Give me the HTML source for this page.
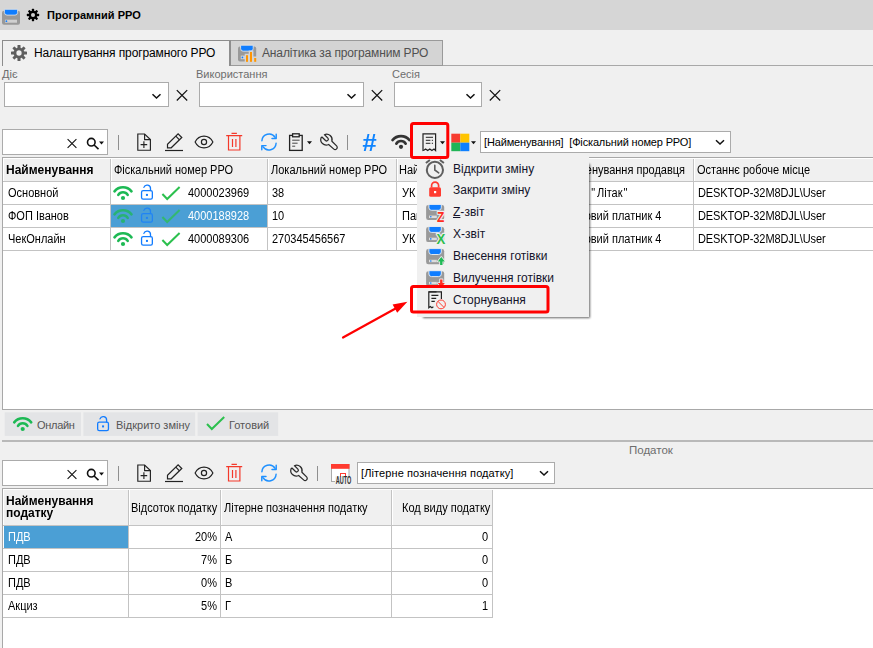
<!DOCTYPE html>
<html lang="uk"><head><meta charset="utf-8"><title>Програмний РРО</title>
<style>
*{box-sizing:border-box;margin:0;padding:0}
html,body{width:873px;height:648px;overflow:hidden;background:#f0f0f0}
body{position:relative;font-family:"Liberation Sans",sans-serif;font-size:11px;color:#000}
.a{position:absolute}
.t{position:absolute;white-space:nowrap;line-height:14px}
#title{left:0;top:0;width:873px;height:30px;background:#d6d6d6}
.tab1{left:2px;top:40px;width:228px;height:26px;border:1px solid #8c8c8c;border-bottom:none;background:#f0f0f0}
.tab2{left:230px;top:40px;width:213px;height:26px;border:1px solid #9a9a9a;border-left:none;background:#d4d4d4}
.tabline{left:229px;top:65px;width:644px;height:1px;background:#a8a8a8}
.lbl{color:#6d6d6d;font-size:11px}
.cb{background:#fff;border:1px solid #ababab}
.grid{background:#fff;border:1px solid #a8a8a8}
.hd{background:#f0f0f0}
.vl{background:#c3c3c3;width:1px}
.hl{background:#c3c3c3;height:1px}
.sel{background:#4b9fd5}
.leg{background:#e3e3e3;height:24px;top:412px}
.legt{color:#555;top:418px}
.mi{font-size:12px;color:#14142b;left:453px;letter-spacing:0.02px}
.sep{width:1px;height:15px;background:#8f8f8f}
svg{position:absolute;overflow:visible}
.hb{font-weight:bold;font-size:12.5px;transform:scaleX(.96);transform-origin:0 50%}
.g{font-size:12.5px;transform:scaleX(.88);transform-origin:0 50%}
.gr{transform-origin:100% 50%}
</style></head><body>
<div id="title" class="a" style="left:0px;top:0px;width:873px;height:30px;"></div>
<div class="t " style="left:47px;top:8px;font-weight:bold;font-size:11px;letter-spacing:0.05px">Програмний РРО</div>
<div class="a tabline" style="left:229px;top:65px;width:644px;height:1px;"></div>
<div class="a tab1"></div><div class="a tab2"></div>
<div class="a " style="left:229px;top:40px;width:2px;height:26px;background:#8e8e8e"></div>
<div class="t " style="left:34px;top:46px;font-size:12px;letter-spacing:-0.12px">Налаштування програмного РРО</div>
<div class="t " style="left:262px;top:46px;font-size:12px;color:#505050;letter-spacing:-0.14px">Аналітика за програмним РРО</div>
<div class="t lbl" style="left:2px;top:67px;">Діє</div>
<div class="t lbl" style="left:196px;top:67px;">Використання</div>
<div class="t lbl" style="left:392px;top:67px;">Сесія</div>
<div class="a cb" style="left:4px;top:82px;width:165px;height:25px;"></div>
<div class="a cb" style="left:199px;top:82px;width:165px;height:25px;"></div>
<div class="a cb" style="left:394px;top:82px;width:88px;height:25px;"></div>
<div class="a cb" style="left:2px;top:129px;width:106px;height:26px;"></div>
<div class="a sep" style="left:118px;top:135px;width:1px;height:15px;"></div>
<div class="a sep" style="left:347px;top:135px;width:1px;height:15px;"></div>
<div class="a cb" style="left:480px;top:131px;width:251px;height:22px;"></div>
<div class="t " style="left:484px;top:135px;letter-spacing:-0.15px">[Найменування]&nbsp; [Фіскальний номер РРО]</div>
<div class="t " style="left:362.3px;top:129.6px;font-weight:bold;font-style:italic;font-size:23px;line-height:26px;color:#0f84ff;transform:scaleX(1.12);transform-origin:0 50%">#</div>
<div class="a grid" style="left:2px;top:157px;width:875px;height:253px;"></div>
<div class="a hd" style="left:3px;top:158px;width:870px;height:23px;"></div>
<div class="a hl" style="left:3px;top:181px;width:870px;height:1px;"></div>
<div class="a hl" style="left:3px;top:204px;width:870px;height:1px;"></div>
<div class="a hl" style="left:3px;top:227px;width:870px;height:1px;"></div>
<div class="a hl" style="left:3px;top:250px;width:870px;height:1px;"></div>
<div class="a vl" style="left:110px;top:158px;width:1px;height:93px;"></div>
<div class="a " style="left:111px;top:158px;width:1px;height:23px;background:#fff"></div>
<div class="a vl" style="left:267px;top:158px;width:1px;height:93px;"></div>
<div class="a " style="left:268px;top:158px;width:1px;height:23px;background:#fff"></div>
<div class="a vl" style="left:396px;top:158px;width:1px;height:93px;"></div>
<div class="a " style="left:397px;top:158px;width:1px;height:23px;background:#fff"></div>
<div class="a vl" style="left:693px;top:158px;width:1px;height:93px;"></div>
<div class="a " style="left:694px;top:158px;width:1px;height:23px;background:#fff"></div>
<div class="a " style="left:3px;top:158px;width:870px;height:1px;background:#fff"></div>
<div class="a " style="left:3px;top:158px;width:1px;height:23px;background:#fff"></div>
<div class="a sel" style="left:111px;top:205px;width:156px;height:22px;"></div>
<div class="t hb" style="left:6px;top:162.5px;">Найменування</div>
<div class="t g " style="left:114px;top:162.5px;">Фіскальний номер РРО</div>
<div class="t g " style="left:271px;top:162.5px;">Локальний номер РРО</div>
<div class="t g " style="left:399.3px;top:162.5px;">Най</div>
<div class="t g " style="left:697px;top:162.5px;">Останнє робоче місце</div>
<div class="t g " style="left:558px;top:162.5px;">Найменування продавця</div>
<div class="t g " style="left:8px;top:186px;">Основной</div>
<div class="t g " style="left:188px;top:186px;">4000023969</div>
<div class="t g " style="left:272px;top:186px;">38</div>
<div class="t g " style="left:402px;top:186px;">УК</div>
<div class="t g " style="left:698px;top:186px;letter-spacing:-0.1px">DESKTOP-32M8DJL\User</div>
<div class="t g " style="left:8px;top:209px;">ФОП Іванов</div>
<div class="t g " style="left:188px;top:209px;color:#fff">4000188928</div>
<div class="t g " style="left:272px;top:209px;">10</div>
<div class="t g " style="left:402px;top:209px;">Пай</div>
<div class="t g " style="left:698px;top:209px;letter-spacing:-0.1px">DESKTOP-32M8DJL\User</div>
<div class="t g " style="left:8px;top:232px;">ЧекОнлайн</div>
<div class="t g " style="left:188px;top:232px;">4000089306</div>
<div class="t g " style="left:272px;top:232px;">270345456567</div>
<div class="t g " style="left:402px;top:232px;">УК</div>
<div class="t g " style="left:698px;top:232px;letter-spacing:-0.1px">DESKTOP-32M8DJL\User</div>
<div class="t g " style="left:566.3px;top:186px;">ТОВ <span style="letter-spacing:2.2px">"</span>Літак<span style="letter-spacing:2.2px;margin-left:1px">"</span></div>
<div class="t g " style="left:562px;top:209px;">Тестовий платник 4</div>
<div class="t g " style="left:562px;top:232px;">Тестовий платник 4</div>
<svg style="left:0;top:0" width="300" height="648"><g fill="#e3e4e6"><rect x="4.7" y="412.3" width="76.3" height="23.6"/><rect x="83.4" y="412.3" width="111.8" height="23.6"/><rect x="197.6" y="412.3" width="80.6" height="23.6"/></g></svg>
<div class="t legt" style="left:37px;top:418px;letter-spacing:-0.3px">Онлайн</div>
<div class="t legt" style="left:116px;top:418px;">Відкрито зміну</div>
<div class="t legt" style="left:229px;top:418px;">Готовий</div>
<div class="a " style="left:2px;top:440px;width:871px;height:2px;background:#b9b9b9"></div>
<div class="t lbl" style="left:629px;top:443px;font-size:11.5px">Податок</div>
<div class="a cb" style="left:2px;top:460px;width:106px;height:26px;"></div>
<div class="a sep" style="left:118px;top:466px;width:1px;height:15px;"></div>
<div class="a sep" style="left:317px;top:466px;width:1px;height:15px;"></div>
<div class="a cb" style="left:357px;top:462px;width:198px;height:22px;"></div>
<div class="t " style="left:361px;top:466px;letter-spacing:0.1px">[Літерне позначення податку]</div>
<div class="a grid" style="left:2px;top:488px;width:875px;height:170px;"></div>
<div class="a hd" style="left:3px;top:489px;width:490px;height:36px;"></div>
<div class="a hl" style="left:3px;top:525px;width:490px;height:1px;"></div>
<div class="a hl" style="left:3px;top:548px;width:490px;height:1px;"></div>
<div class="a hl" style="left:3px;top:571px;width:490px;height:1px;"></div>
<div class="a hl" style="left:3px;top:594px;width:490px;height:1px;"></div>
<div class="a hl" style="left:3px;top:617px;width:490px;height:1px;"></div>
<div class="a vl" style="left:128px;top:489px;width:1px;height:129px;"></div>
<div class="a vl" style="left:220px;top:489px;width:1px;height:129px;"></div>
<div class="a vl" style="left:391px;top:489px;width:1px;height:129px;"></div>
<div class="a vl" style="left:492px;top:489px;width:1px;height:129px;"></div>
<div class="a " style="left:129px;top:489px;width:1px;height:36px;background:#fff"></div>
<div class="a " style="left:221px;top:489px;width:1px;height:36px;background:#fff"></div>
<div class="a " style="left:392px;top:489px;width:1px;height:36px;background:#fff"></div>
<div class="a " style="left:3px;top:489px;width:490px;height:1px;background:#fff"></div>
<div class="a " style="left:3px;top:489px;width:1px;height:36px;background:#fff"></div>
<div class="a sel" style="left:4px;top:526px;width:124px;height:22px;"></div>
<div class="t hb" style="left:6.3px;top:494.6px;line-height:12.1px">Найменування<br>податку</div>
<div class="t g " style="left:131px;top:501px;">Відсоток податку</div>
<div class="t g " style="left:224px;top:501px;">Літерне позначення податку</div>
<div class="t g " style="left:402px;top:501px;">Код виду податку</div>
<div class="t g " style="left:8px;top:530px;color:#fff">ПДВ</div>
<div class="t g gr" style="left:129px;width:88px;text-align:right;top:530px">20%</div>
<div class="t g " style="left:225px;top:530px;">А</div>
<div class="t g gr" style="left:392px;width:96px;text-align:right;top:530px">0</div>
<div class="t g " style="left:8px;top:553px;">ПДВ</div>
<div class="t g gr" style="left:129px;width:88px;text-align:right;top:553px">7%</div>
<div class="t g " style="left:225px;top:553px;">Б</div>
<div class="t g gr" style="left:392px;width:96px;text-align:right;top:553px">0</div>
<div class="t g " style="left:8px;top:576px;">ПДВ</div>
<div class="t g gr" style="left:129px;width:88px;text-align:right;top:576px">0%</div>
<div class="t g " style="left:225px;top:576px;">В</div>
<div class="t g gr" style="left:392px;width:96px;text-align:right;top:576px">0</div>
<div class="t g " style="left:8px;top:599px;">Акциз</div>
<div class="t g gr" style="left:129px;width:88px;text-align:right;top:599px">5%</div>
<div class="t g " style="left:225px;top:599px;">Г</div>
<div class="t g gr" style="left:392px;width:96px;text-align:right;top:599px">1</div>
<svg style="left:0;top:0" width="873" height="648" viewBox="0 0 873 648"><rect x="2" y="10.7" width="18" height="14" rx="2" fill="#999"/><path d="M4.4 9.299999999999999h13.2v3.2a2.6 2.6 0 0 1 -2.6 2.6h-8a2.6 2.6 0 0 1 -2.6 -2.6z" fill="#0f7dff" stroke="#e8e8e8" stroke-width="0.8"/><rect x="5" y="19.7" width="12" height="3" fill="#d0d0d0"/><circle cx="6.4" cy="21.2" r="0.9" fill="#0f7dff"/><g transform="translate(33 15)" fill="#000"><rect x="-1.18" y="-6.20" width="2.36" height="3.10" rx="0.6" transform="rotate(0)"/><rect x="-1.18" y="-6.20" width="2.36" height="3.10" rx="0.6" transform="rotate(45)"/><rect x="-1.18" y="-6.20" width="2.36" height="3.10" rx="0.6" transform="rotate(90)"/><rect x="-1.18" y="-6.20" width="2.36" height="3.10" rx="0.6" transform="rotate(135)"/><rect x="-1.18" y="-6.20" width="2.36" height="3.10" rx="0.6" transform="rotate(180)"/><rect x="-1.18" y="-6.20" width="2.36" height="3.10" rx="0.6" transform="rotate(225)"/><rect x="-1.18" y="-6.20" width="2.36" height="3.10" rx="0.6" transform="rotate(270)"/><rect x="-1.18" y="-6.20" width="2.36" height="3.10" rx="0.6" transform="rotate(315)"/><circle r="4.22"/><circle r="2.05" fill="#cfcfcf"/></g><g transform="translate(19 53)" fill="#5f5f5f"><rect x="-1.52" y="-8.00" width="3.04" height="4.00" rx="0.6" transform="rotate(0)"/><rect x="-1.52" y="-8.00" width="3.04" height="4.00" rx="0.6" transform="rotate(45)"/><rect x="-1.52" y="-8.00" width="3.04" height="4.00" rx="0.6" transform="rotate(90)"/><rect x="-1.52" y="-8.00" width="3.04" height="4.00" rx="0.6" transform="rotate(135)"/><rect x="-1.52" y="-8.00" width="3.04" height="4.00" rx="0.6" transform="rotate(180)"/><rect x="-1.52" y="-8.00" width="3.04" height="4.00" rx="0.6" transform="rotate(225)"/><rect x="-1.52" y="-8.00" width="3.04" height="4.00" rx="0.6" transform="rotate(270)"/><rect x="-1.52" y="-8.00" width="3.04" height="4.00" rx="0.6" transform="rotate(315)"/><circle r="5.44"/><circle r="2.64" fill="#f0f0f0"/></g><rect x="238" y="46.4" width="18.2" height="15" rx="2" fill="#999"/><path d="M240.6 45.2h12.6v3.4a2.6 2.6 0 0 1 -2.6 2.6h-7.4a2.6 2.6 0 0 1 -2.6 -2.6z" fill="#0f7dff" stroke="#e4e4e4" stroke-width="0.9"/><rect x="240.8" y="55.6" width="5" height="3.6" fill="#d4d4d4"/><circle cx="242.4" cy="57.4" r="0.85" fill="#0f7dff"/><path d="M244.7 62.5V53.7H248.7V50.6H253.4V56.6H257V62.5Z" fill="#d4d4d4"/><rect x="246" y="55.2" width="2" height="6.6" fill="#ff9500"/><rect x="250" y="52" width="2" height="9.8" fill="#ff9500"/><rect x="254.2" y="58" width="2" height="3.8" fill="#ff9500"/><path d="M152.5 94.2L156.5 98L160.5 94.2" fill="none" stroke="#111" stroke-width="1.5"/><path d="M347.5 94.2L351.5 98L355.5 94.2" fill="none" stroke="#111" stroke-width="1.5"/><path d="M466.5 94.2L470.5 98L474.5 94.2" fill="none" stroke="#111" stroke-width="1.5"/><path d="M176.8 90.1L187.2 100.5M187.2 90.1L176.8 100.5" fill="none" stroke="#111" stroke-width="1.25"/><path d="M371.8 90.1L382.2 100.5M382.2 90.1L371.8 100.5" fill="none" stroke="#111" stroke-width="1.25"/><path d="M489.8 90.1L500.2 100.5M500.2 90.1L489.8 100.5" fill="none" stroke="#111" stroke-width="1.25"/><path d="M67.6 139.1L76.4 147.9M76.4 139.1L67.6 147.9" fill="none" stroke="#111" stroke-width="1.1"/><g fill="none" stroke="#111" stroke-width="1.6"><circle cx="91.3" cy="142.2" r="3.8"/><path d="M94.1 145.0l4.4 4.2"/></g><path d="M99 141.4h5l-2.5 3z" fill="#111"/><g fill="none" stroke="#222" stroke-width="1.15"><path d="M137.79999999999998 134.0h6.8l5.8 5.6v10.6h-12.6z"/><path d="M144.6 134.0v5.6h5.8"/><path d="M143.89999999999998 141.3v6.6M140.6 144.6h6.6"/></g><g fill="none" stroke="#222" stroke-width="1.2"><path d="M165 150.5h18"/><path d="M167.5 147.79999999999998v-3.6l10.6 -10.4l3.7 3.7l-10.6 10.3z"/><path d="M175.8 136.1l3.7 3.7"/></g><g fill="none" stroke="#222" stroke-width="1.2" stroke-linejoin="round"><path d="M195.1 142C199 134.2 209 134.2 212.9 142C209 149.8 199 149.8 195.1 142z"/><circle cx="204" cy="142" r="2.6"/></g><g fill="none" stroke="#f4392b" stroke-width="1.2"><path d="M226.2 135.6h16M231.5 133.4h5.4"/><path d="M228.5 135.6v14.4h11.4v-14.4"/><path d="M232.5 139v8M235.89999999999998 139v8"/></g><g fill="none" stroke="#1e90ff" stroke-width="1.45" stroke-linecap="round" stroke-linejoin="round"><path d="M261.9 140.8a7.2 7.2 0 0 1 13.2 -3.5"/><path d="M276.2 134.2v4.2h-4.2"/><path d="M276.1 143.2a7.2 7.2 0 0 1 -13.2 3.5"/><path d="M261.8 149.8v-4.2h4.2"/></g><path d="M67.6 470.1L76.4 478.9M76.4 470.1L67.6 478.9" fill="none" stroke="#111" stroke-width="1.1"/><g fill="none" stroke="#111" stroke-width="1.6"><circle cx="91.3" cy="473.2" r="3.8"/><path d="M94.1 476.0l4.4 4.2"/></g><path d="M99 472.4h5l-2.5 3z" fill="#111"/><g fill="none" stroke="#222" stroke-width="1.15"><path d="M137.79999999999998 465.0h6.8l5.8 5.6v10.6h-12.6z"/><path d="M144.6 465.0v5.6h5.8"/><path d="M143.89999999999998 472.29999999999995v6.6M140.6 475.59999999999997h6.6"/></g><g fill="none" stroke="#222" stroke-width="1.2"><path d="M165 481.5h18"/><path d="M167.5 478.8v-3.6l10.6 -10.4l3.7 3.7l-10.6 10.3z"/><path d="M175.8 467.09999999999997l3.7 3.7"/></g><g fill="none" stroke="#222" stroke-width="1.2" stroke-linejoin="round"><path d="M195.1 473C199 465.2 209 465.2 212.9 473C209 480.8 199 480.8 195.1 473z"/><circle cx="204" cy="473" r="2.6"/></g><g fill="none" stroke="#f4392b" stroke-width="1.2"><path d="M226.2 466.6h16M231.5 464.4h5.4"/><path d="M228.5 466.6v14.4h11.4v-14.4"/><path d="M232.5 470v8M235.89999999999998 470v8"/></g><g fill="none" stroke="#1e90ff" stroke-width="1.45" stroke-linecap="round" stroke-linejoin="round"><path d="M261.9 471.8a7.2 7.2 0 0 1 13.2 -3.5"/><path d="M276.2 465.2v4.2h-4.2"/><path d="M276.1 474.2a7.2 7.2 0 0 1 -13.2 3.5"/><path d="M261.8 480.8v-4.2h4.2"/></g><g fill="none" stroke="#222" stroke-width="1.3"><rect x="289.6" y="135.4" width="12.6" height="15" /><rect x="292.6" y="133.8" width="6.6" height="3" fill="#f0f0f0"/><path stroke-width="1" stroke="#444" d="M292.2 140.20000000000002h7.4M292.2 143.20000000000002h5.4M292.2 146.20000000000002h3"/></g><path d="M307 141.3h5l-2.5 3z" fill="#111"/><path transform="translate(320 133)" fill="none" stroke="#2b2b2b" stroke-width="1.25" stroke-linejoin="round" d="M4.4 1.7A5.5 5.5 0 0 1 11.9 8.2L16.6 12.9A2.1 2.1 0 0 1 13.6 15.9L8.6 11.5A5.5 5.5 0 0 1 1.2 4.4L2.2 4.2L5.5 7.5A1.7 1.7 0 0 0 7.9 5.1L4.6 1.8Z"/><path transform="translate(290 464)" fill="none" stroke="#2b2b2b" stroke-width="1.25" stroke-linejoin="round" d="M4.4 1.7A5.5 5.5 0 0 1 11.9 8.2L16.6 12.9A2.1 2.1 0 0 1 13.6 15.9L8.6 11.5A5.5 5.5 0 0 1 1.2 4.4L2.2 4.2L5.5 7.5A1.7 1.7 0 0 0 7.9 5.1L4.6 1.8Z"/><g opacity="1" fill="none" stroke="#333" stroke-width="2.6" stroke-linecap="round"><circle cx="401" cy="146.8" r="2.1" fill="#333" stroke="none"/><path d="M396.3 143.70000000000002a5.5 5.5 0 0 1 9.4 0"/><path d="M392.5 140.10000000000002a11 11 0 0 1 17 0"/></g><g fill="none" stroke="#222" stroke-width="1.2"><path d="M423.0 150.5v-16.6h12.6v16.6l-1.6 -1.5l-2.1 1.5l-2.1 -1.5l-2.1 1.5l-2.1 -1.5l-1.3 1z"/><path stroke-width="1" d="M425.79999999999995 137.3h7.2M425.79999999999995 140.3h4.6M431.79999999999995 140.3h1.2M425.79999999999995 143.3h4.6M431.79999999999995 143.3h1.2"/></g><path d="M440 141.3h5l-2.5 3z" fill="#111"/><rect x="451.3" y="133.7" width="9" height="9" fill="#f73c30"/><rect x="460.3" y="133.7" width="9" height="9" fill="#ffc400"/><rect x="451.3" y="142.7" width="9" height="8.5" fill="#20b457"/><rect x="460.3" y="142.7" width="9" height="8.5" fill="#0f80ff"/><path d="M471 141.3h5l-2.5 3z" fill="#111"/><path d="M716 140.2L720 144L724 140.2" fill="none" stroke="#111" stroke-width="1.5"/><path d="M540 471.2L544 475L548 471.2" fill="none" stroke="#111" stroke-width="1.5"/><rect x="331.5" y="464.5" width="17.5" height="17" fill="#fff" stroke="#aaa" stroke-width="1"/><rect x="331" y="464" width="18.5" height="4.8" fill="#ff3b30"/><rect x="340.5" y="473.5" width="5" height="4" fill="none" stroke="#ff3b30"/><rect x="335" y="476.5" width="17" height="8" fill="#f0f0f0"/><text transform="translate(335.8 484.3) scale(0.54 1)" font-family="Liberation Sans, sans-serif" font-weight="bold" font-size="10.2" fill="#2e2e2e">AUTO</text><g opacity="1" fill="none" stroke="#1db954" stroke-width="2.6" stroke-linecap="round"><circle cx="123" cy="198" r="2.1" fill="#1db954" stroke="none"/><path d="M118.3 194.9a5.5 5.5 0 0 1 9.4 0"/><path d="M114.5 191.3a11 11 0 0 1 17 0"/></g><g opacity="1" fill="none" stroke="#127cff" stroke-width="1.3" stroke-linecap="round"><rect x="141.55" y="190.55" width="10.8" height="8.6" rx="1.6"/><path d="M150.5 190.55v-1.75a3.4 3.4 0 0 0 -6.6 -1.4"/><rect x="145.95000000000002" y="193.9" width="2" height="2" fill="#127cff" stroke="none"/></g><path opacity="1" d="M162.4 194l4.8 5l12.4 -12" fill="none" stroke="#2cc04e" stroke-width="2"/><g opacity="0.75" fill="none" stroke="#1db954" stroke-width="2.6" stroke-linecap="round"><circle cx="123" cy="221" r="2.1" fill="#1db954" stroke="none"/><path d="M118.3 217.9a5.5 5.5 0 0 1 9.4 0"/><path d="M114.5 214.3a11 11 0 0 1 17 0"/></g><g opacity="0.75" fill="none" stroke="#127cff" stroke-width="1.3" stroke-linecap="round"><rect x="141.55" y="213.55" width="10.8" height="8.6" rx="1.6"/><path d="M150.5 213.55v-1.75a3.4 3.4 0 0 0 -6.6 -1.4"/><rect x="145.95000000000002" y="216.9" width="2" height="2" fill="#127cff" stroke="none"/></g><path opacity="0.75" d="M162.4 217l4.8 5l12.4 -12" fill="none" stroke="#2cc04e" stroke-width="2"/><g opacity="1" fill="none" stroke="#1db954" stroke-width="2.6" stroke-linecap="round"><circle cx="123" cy="244" r="2.1" fill="#1db954" stroke="none"/><path d="M118.3 240.9a5.5 5.5 0 0 1 9.4 0"/><path d="M114.5 237.3a11 11 0 0 1 17 0"/></g><g opacity="1" fill="none" stroke="#127cff" stroke-width="1.3" stroke-linecap="round"><rect x="141.55" y="236.55" width="10.8" height="8.6" rx="1.6"/><path d="M150.5 236.55v-1.75a3.4 3.4 0 0 0 -6.6 -1.4"/><rect x="145.95000000000002" y="239.9" width="2" height="2" fill="#127cff" stroke="none"/></g><path opacity="1" d="M162.4 240l4.8 5l12.4 -12" fill="none" stroke="#2cc04e" stroke-width="2"/><g opacity="1" fill="none" stroke="#1db954" stroke-width="2.6" stroke-linecap="round"><circle cx="22.7" cy="429" r="2.1" fill="#1db954" stroke="none"/><path d="M18.0 425.9a5.5 5.5 0 0 1 9.4 0"/><path d="M14.2 422.3a11 11 0 0 1 17 0"/></g><g opacity="1" fill="none" stroke="#127cff" stroke-width="1.3" stroke-linecap="round"><rect x="97.65" y="422.04999999999995" width="10.8" height="8.6" rx="1.6"/><path d="M106.6 422.04999999999995v-1.75a3.4 3.4 0 0 0 -6.6 -1.4"/><rect x="102.05" y="425.4" width="2" height="2" fill="#127cff" stroke="none"/></g><path opacity="1" d="M207 424l4.8 5l12.4 -12" fill="none" stroke="#2cc04e" stroke-width="2"/></svg>
<div class="a " style="left:423px;top:163.5px;width:167.3px;height:154.6px;background:rgba(0,0,0,.6);filter:blur(1px)"></div>
<div class="a " style="left:417px;top:157px;width:172px;height:159.6px;background:#f0f0f0"></div>
<div class="t mi" style="left:453px;top:162.2px;">Відкрити зміну</div>
<div class="t mi" style="left:453px;top:183.2px;">Закрити зміну</div>
<div class="t mi" style="left:453px;top:205px;"><u>Z</u>-звіт</div>
<div class="t mi" style="left:453px;top:226.8px;">X-звіт</div>
<div class="t mi" style="left:453px;top:248.8px;">Внесення готівки</div>
<div class="t mi" style="left:453px;top:270.6px;">Вилучення готівки</div>
<div class="t mi" style="left:453px;top:292.8px;">Сторнування</div>
<svg style="left:0;top:0" width="873" height="648" viewBox="0 0 873 648"><g fill="none" stroke="#5e5e5e" stroke-width="2" stroke-linecap="round"><circle cx="434.9" cy="169.9" r="8.1"/><path d="M434.8 165.4v4.6l3.9 2.8" stroke-width="1.6"/><path d="M425.9 163l4 -3M443.9 163l-4 -3" stroke-linecap="butt"/></g><rect x="429.2" y="187.2" width="11.8" height="9.6" rx="1.6" fill="#ff3b30"/><path d="M431.6 187.6v-2a3.5 3.5 0 0 1 7 0v2" fill="none" stroke="#ff3b30" stroke-width="1.7"/><rect x="434" y="191" width="2.2" height="2.2" fill="#fff"/><rect x="426.1" y="204.9" width="18.1" height="15.1" rx="2.2" fill="#999"/><path d="M428.9 204.4h12.4v3.3a2.6 2.6 0 0 1 -2.6 2.6h-7.2a2.6 2.6 0 0 1 -2.6 -2.6z" fill="#0f7dff" stroke="#f0f0f0" stroke-width="0.9"/><rect x="429" y="215.6" width="7.8" height="2.4" fill="#dcdcdc"/><circle cx="430.8" cy="216.8" r="0.8" fill="#0f7dff"/><text x="437" y="221.7" font-family="Liberation Sans, sans-serif" font-weight="bold" font-size="14.4" stroke="#f0f0f0" stroke-width="2.4" paint-order="stroke" stroke-linejoin="round" fill="#ff2d20" textLength="7.3" lengthAdjust="spacingAndGlyphs">Z</text><rect x="426.1" y="227" width="18.1" height="15.1" rx="2.2" fill="#999"/><path d="M428.9 226.5h12.4v3.3a2.6 2.6 0 0 1 -2.6 2.6h-7.2a2.6 2.6 0 0 1 -2.6 -2.6z" fill="#0f7dff" stroke="#f0f0f0" stroke-width="0.9"/><rect x="429" y="237.7" width="7.8" height="2.4" fill="#dcdcdc"/><circle cx="430.8" cy="238.9" r="0.8" fill="#0f7dff"/><text x="436.5" y="243.8" font-family="Liberation Sans, sans-serif" font-weight="bold" font-size="14.4" stroke="#f0f0f0" stroke-width="2.4" paint-order="stroke" stroke-linejoin="round" fill="#2dbd4e" textLength="8.8" lengthAdjust="spacingAndGlyphs">X</text><rect x="426.1" y="249.1" width="18.1" height="15.1" rx="2.2" fill="#999"/><path d="M428.9 248.6h12.4v3.3a2.6 2.6 0 0 1 -2.6 2.6h-7.2a2.6 2.6 0 0 1 -2.6 -2.6z" fill="#0f7dff" stroke="#f0f0f0" stroke-width="0.9"/><rect x="429" y="259.8" width="7.8" height="2.4" fill="#dcdcdc"/><circle cx="430.8" cy="261.0" r="0.8" fill="#0f7dff"/><path d="M441.3 257l3.5 4.4h-2.3v3.6h-2.4v-3.6h-2.3z" fill="#1fb955" stroke="#f0f0f0" stroke-width="1.6" paint-order="stroke" stroke-linejoin="round"/><rect x="426.1" y="271.2" width="18.1" height="15.1" rx="2.2" fill="#999"/><path d="M428.9 270.7h12.4v3.3a2.6 2.6 0 0 1 -2.6 2.6h-7.2a2.6 2.6 0 0 1 -2.6 -2.6z" fill="#0f7dff" stroke="#f0f0f0" stroke-width="0.9"/><rect x="429" y="281.9" width="7.8" height="2.4" fill="#dcdcdc"/><circle cx="430.8" cy="283.09999999999997" r="0.8" fill="#0f7dff"/><path d="M441.3 287.4l3.5 -4.4h-2.3v-3.6h-2.4v3.6h-2.3z" fill="#ff2d20" stroke="#f0f0f0" stroke-width="1.6" paint-order="stroke" stroke-linejoin="round"/><g fill="none" stroke="#222" stroke-width="1.2"><path d="M436.5 291.9h-7.7v15.8l1.5 -1.2l1.6 1.2l1.5 -1"/><path d="M428.8 291.9h12.6v7"/><path d="M431.4 295.4h7M431.4 298.4h4.8M431.4 301.4h3.4"/></g><circle cx="441" cy="304.4" r="4.4" fill="#f0f0f0" stroke="#ff3b30" stroke-width="1"/><path d="M437.9 301.3l6.2 6.2" stroke="#ff3b30" stroke-width="1"/><rect x="411.5" y="123.5" width="36.3" height="34.1" rx="2" fill="none" stroke="#ff0000" stroke-width="3"/><rect x="411.5" y="286.6" width="136.5" height="25.4" rx="2" fill="none" stroke="#ff0000" stroke-width="3"/><path d="M343 337.5L396 308.2" stroke="#ff0000" stroke-width="2.2" stroke-linecap="round"/><path d="M407.4 301.7l-14.8 2.8l4.6 8.2z" fill="#ff0000"/></svg>
</body></html>
